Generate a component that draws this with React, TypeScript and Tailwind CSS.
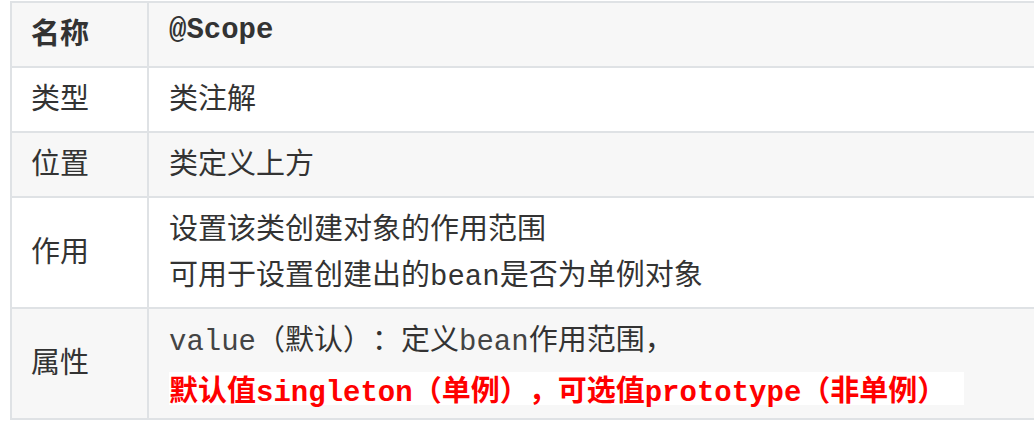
const cjk = "font-['Noto_Sans_CJK_SC','Noto_Sans',sans-serif]"
const mono = "font-['Liberation_Mono','Noto_Sans_CJK_SC',monospace]"

function Row({
  label,
  bg,
  bold,
  children,
}: {
  label: string
  bg: string
  bold?: boolean
  children: React.ReactNode
}) {
  return (
    <div className={`flex border-b-2 border-[#dfe2e5] ${bg}`}>
      <div
        className={`w-[137px] shrink-0 border-r-2 border-[#dfe2e5] pl-[19px] flex items-center pt-[5px] pb-[12px] ${bold ? 'font-bold' : ''}`}
      >
        {label}
      </div>
      <div className="flex-1 pl-[20px] pt-[5px] pb-[12px] flex flex-col justify-center">{children}</div>
    </div>
  )
}

// one text line inside a cell, fixed height so mixed fonts don't grow the line box
function Line({ children, className = '' }: { children: React.ReactNode; className?: string }) {
  return <div className={`h-[46px] leading-[46px] whitespace-pre ${className}`}>{children}</div>
}

export default function App() {
  return (
    <div
      className={`w-[1034px] h-[424px] overflow-hidden bg-white ${cjk} text-[29px] leading-[46px] text-[#333333] [text-spacing-trim:space-all]`}
    >
      <div className="ml-[10px] mt-[1px] w-[1040px] border-l-2 border-t-2 border-[#dfe2e5]">
        <Row label="名称" bg="bg-[#f7f7f7]" bold>
          <Line className={`${mono} font-bold`}>@Scope</Line>
        </Row>
        <Row label="类型" bg="bg-white">
          <Line>类注解</Line>
        </Row>
        <Row label="位置" bg="bg-[#f7f7f7]">
          <Line>类定义上方</Line>
        </Row>
        <Row label="作用" bg="bg-white">
          <Line>设置该类创建对象的作用范围</Line>
          <Line>
            可用于设置创建出的<span className={mono}>bean</span>是否为单例对象
          </Line>
        </Row>
        <Row label="属性" bg="bg-[#f7f7f7]">
          <Line>
            <span className={`${mono} text-[#444]`}>value</span>（默认）：定义<span className={`${mono} text-[#444]`}>bean</span>作用范围，
          </Line>
          <Line>
            <span className="inline-block h-[33px] leading-[33px] align-middle bg-white font-bold text-[#ff0000]">
              默认值<span className={mono}>singleton</span>（单例），可选值<span className={mono}>prototype</span>（非单例）<span className={mono}> </span>
            </span>
          </Line>
        </Row>
      </div>
    </div>
  )
}
